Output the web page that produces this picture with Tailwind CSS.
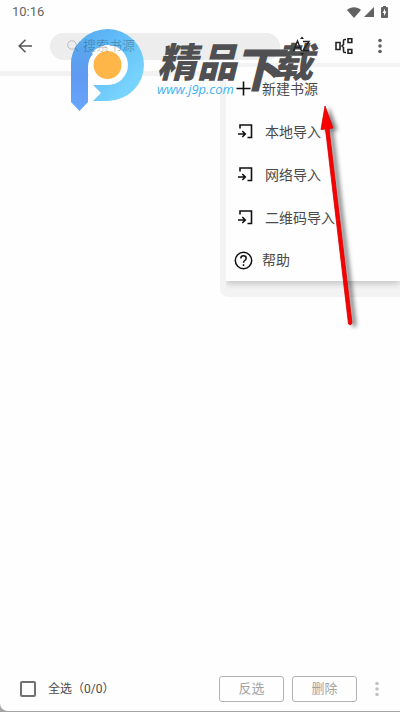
<!DOCTYPE html>
<html lang="zh-CN">
<head>
  <meta charset="UTF-8" />
  <meta name="viewport" content="width=device-width, initial-scale=1" />
  <title>书源管理</title>
  <script src="https://cdn.jsdelivr.net/npm/@tailwindcss/browser@4"></script>
</head>
<body class="bg-[#a3a3a3] font-[Roboto,'Noto_Sans_CJK_SC',sans-serif] text-[#4a4a4a]">
  <div class="relative flex flex-col min-h-screen overflow-hidden border-b border-[#a3a3a3] rounded-bl-lg bg-[#fefefe]">

    <!-- Status bar -->
    <div class="flex items-center justify-between h-6 pl-3 pr-3">
      <span class="text-[13px] leading-6 text-[#666]">10:16</span>
      <div class="flex items-center gap-[3px] text-[#626262]">
        <svg class="w-[14px] h-[11px]" viewBox="0 0 14 11" fill="currentColor"><path d="M0 3C4-.6 10-.6 14 3L7 11z" /></svg>
        <svg class="w-[10px] h-[10px]" viewBox="0 0 10 10" fill="currentColor"><path d="M10 0v10H0z" /></svg>
        <svg class="ml-1 w-[7px] h-3" viewBox="0 0 7 12"><path d="M2 0h3v1h1q1 0 1 1v9q0 1-1 1H1q-1 0-1-1V2q0-1 1-1h1z" fill="currentColor" /><path d="M4 2.5 1.5 7H3v3l2.5-4.5H4z" fill="#fff" /></svg>
      </div>
    </div>

    <!-- Toolbar -->
    <header class="flex items-center h-[52px] pb-[3px] pl-[18px] pr-3 border-b-5 border-[#f2f2f2]">
      <button aria-label="返回" class="shrink-0">
        <svg class="w-[14px] h-[14px]" viewBox="0 0 14 14" fill="none" stroke="#555" stroke-width="1.5"><path d="M14 7H1M7.5.7 1.2 7l6.3 6.3" /></svg>
      </button>
      <label class="flex flex-1 items-center ml-[18px] h-[27px] pl-[17px] rounded-full bg-[#ededed]">
        <svg class="relative z-30 shrink-0 w-3 h-3" viewBox="0 0 12 12" fill="none" stroke="#000" stroke-opacity=".2"><circle cx="5" cy="5" r="4.3" /><path d="m8 8 3.5 3.5" /></svg>
        <input type="text" aria-label="搜索书源" placeholder="搜索书源" class="relative z-30 ml-1 min-w-0 w-full text-[13px] outline-none placeholder:text-black/25" />
      </label>
      <button aria-label="排序" class="relative z-30 ml-3 shrink-0">
        <svg class="w-5 h-5" viewBox="0 0 20 20" fill="none" stroke="#222" stroke-width="1.4"><path d="m1.500 15 4-10 4 10M3 11.500h5M11 5.500h6l-6 9h6.500" /><path d="m8 3 2-2.5L12 3zM8 17l2 2.5 2-2.5z" fill="#222" stroke="none" /></svg>
      </button>
      <button aria-label="分组" class="ml-[23px] shrink-0">
        <svg class="w-[18px] h-[18px]" viewBox="0 0 18 18" fill="none" stroke="#222" stroke-width="1.6"><path d="M1 5.500h4v7H1zM13 1.700h3.800v3.800H13zM13 12.500h3.800v3.800H13zM11 2.500H9.800q-1.300 0-1.300 1.300v3.700L7 9l1.500 1.500v3.700q0 1.300 1.300 1.300H11" /></svg>
      </button>
      <button aria-label="更多" class="ml-[25px] mr-[6px] shrink-0">
        <svg class="w-1 h-4" viewBox="0 0 4 16" fill="#606060"><circle cx="2" cy="2.5" r="1.8" /><circle cx="2" cy="8" r="1.8" /><circle cx="2" cy="13.5" r="1.8" /></svg>
      </button>
    </header>

    <main class="flex-1"></main>

    <!-- Bottom bar -->
    <footer class="flex items-center h-11 pl-5 pr-[21px] text-[13px]">
      <label class="flex flex-1 items-center gap-3 text-xs">
        <input type="checkbox" class="appearance-none w-4 h-4 rounded-[2px] border-2 border-[#707070]" />
        <span>全选（0/0）</span>
      </label>
      <button disabled class="w-[65px] h-[26px] rounded-[3px] border border-[#b3b3b3] text-[#a3a3a3]">反选</button>
      <button disabled class="ml-2 w-[65px] h-[26px] rounded-[3px] border border-[#b3b3b3] text-[#a3a3a3]">删除</button>
      <button aria-label="更多操作" class="ml-[18px]">
        <svg class="w-1 h-4" viewBox="0 0 4 16" fill="#c2c2c2"><circle cx="2" cy="2.5" r="1.8" /><circle cx="2" cy="8" r="1.8" /><circle cx="2" cy="13.5" r="1.8" /></svg>
      </button>
    </footer>

    <!-- Popup menu -->
    <div class="absolute right-0 top-[63px] pt-1 pl-[6px] pb-4 rounded-bl-lg bg-[#f3f3f3]">
      <ul class="w-[174px] bg-[#fefefe] shadow-[0_3px_6px_rgba(0,0,0,0.18)] text-sm [clip-path:inset(0_0_-12px_0)]">
        <li>
          <button class="flex items-center gap-[9px] w-full h-[43px] pl-2">
            <svg class="w-[19px] h-[19px]" viewBox="0 0 19 19" fill="none" stroke="#111" stroke-width="1.6"><path d="M9.5 2.5v14M2.5 9.5h14" /></svg>
            新建书源
          </button>
        </li>
        <li>
          <button class="flex items-center gap-3 w-full h-[43px] pl-3">
            <svg class="w-[15px] h-[15px]" viewBox="0 0 15 15" fill="none" stroke="#111" stroke-width="1.6"><path d="M2 4.500V1h11.500v12.500H9.500M0 10h7M4.300 7l3 3-3 3" /></svg>
            本地导入
          </button>
        </li>
        <li>
          <button class="flex items-center gap-3 w-full h-[43px] pl-3">
            <svg class="w-[15px] h-[15px]" viewBox="0 0 15 15" fill="none" stroke="#111" stroke-width="1.6"><path d="M2 4.500V1h11.500v12.500H9.500M0 10h7M4.300 7l3 3-3 3" /></svg>
            网络导入
          </button>
        </li>
        <li>
          <button class="flex items-center gap-3 w-full h-[43px] pl-3">
            <svg class="w-[15px] h-[15px]" viewBox="0 0 15 15" fill="none" stroke="#111" stroke-width="1.6"><path d="M2 4.500V1h11.500v12.500H9.500M0 10h7M4.300 7l3 3-3 3" /></svg>
            二维码导入
          </button>
        </li>
        <li>
          <button class="flex items-center gap-[9px] w-full h-[42px] pl-2">
            <svg class="w-[19px] h-[19px]" viewBox="0 0 19 19" fill="none" stroke="#111" stroke-width="1.5"><circle cx="9.5" cy="9.5" r="8.2" /><path d="M6.8 7.5q0-2.7 2.7-2.7t2.7 2.5q0 1.2-1.4 2.2-1.3.9-1.3 2.3M9.5 13.2v1.7" /></svg>
            帮助
          </button>
        </li>
      </ul>
    </div>

    <!-- Site watermark -->
    <div class="absolute left-[71px] top-7 z-20 pointer-events-none">
      <svg class="w-[74px] h-[84px]" viewBox="0 0 74 84">
        <defs>
          <linearGradient id="ring" x1="0" y1="0" x2="1" y2="1">
            <stop offset="0" stop-color="#55a6ee" />
            <stop offset=".4" stop-color="#62bdf9" />
            <stop offset="1" stop-color="#83deff" />
          </linearGradient>
          <linearGradient id="stem" x1="0" y1="0" x2="0" y2="1">
            <stop offset="0" stop-color="#57a8ed" />
            <stop offset=".5" stop-color="#6099f2" />
            <stop offset="1" stop-color="#68a7fb" />
          </linearGradient>
        </defs>
        <circle cx="36.5" cy="37" r="21" fill="#fff" />
        <path d="M0 36A36.500 36 0 1 1 37 73H22L30 65 22 57H37A20 20 0 1 0 17 36z" fill="url(#ring)" />
        <path d="M0 36Q0 23 9 13L22 26Q17 31 17 39V74L8.500 83 0 74z" fill="url(#stem)" />
        <circle cx="36.5" cy="37" r="14" fill="#ffb648" />
      </svg>
    </div>
    <div class="absolute left-[157px] top-9 z-20 pointer-events-none whitespace-nowrap">
      <div class="flex items-start font-['Noto_Sans_CJK_SC',sans-serif] font-black italic text-[#505052]">
        <span class="text-[40px] leading-[48px]">精品</span>
        <span class="-ml-1 text-[48px] leading-[60px]">下</span>
        <span class="-ml-2 text-[40px] leading-[48px]">载</span>
      </div>
    </div>
    <div class="absolute left-[157px] top-[79px] z-20 pointer-events-none font-['Open_Sans',sans-serif] text-[13px] leading-5 italic font-medium text-[#40b2f3]">www.j9p.com</div>

    <!-- Pointer arrow -->
    <svg class="absolute left-[310px] top-[100px] z-20 w-[60px] h-[235px] pointer-events-none drop-shadow-[4px_2px_2px_rgba(0,0,0,0.5)]" viewBox="0 0 60 235">
      <path d="M15 6 23 28 19 28.500 42 223Q41 226 38.500 224L15.500 29 11 29.500z" fill="#fb0000" stroke="#d40000" stroke-width=".8" stroke-linejoin="round" />
    </svg>
  </div>
</body>
</html>
